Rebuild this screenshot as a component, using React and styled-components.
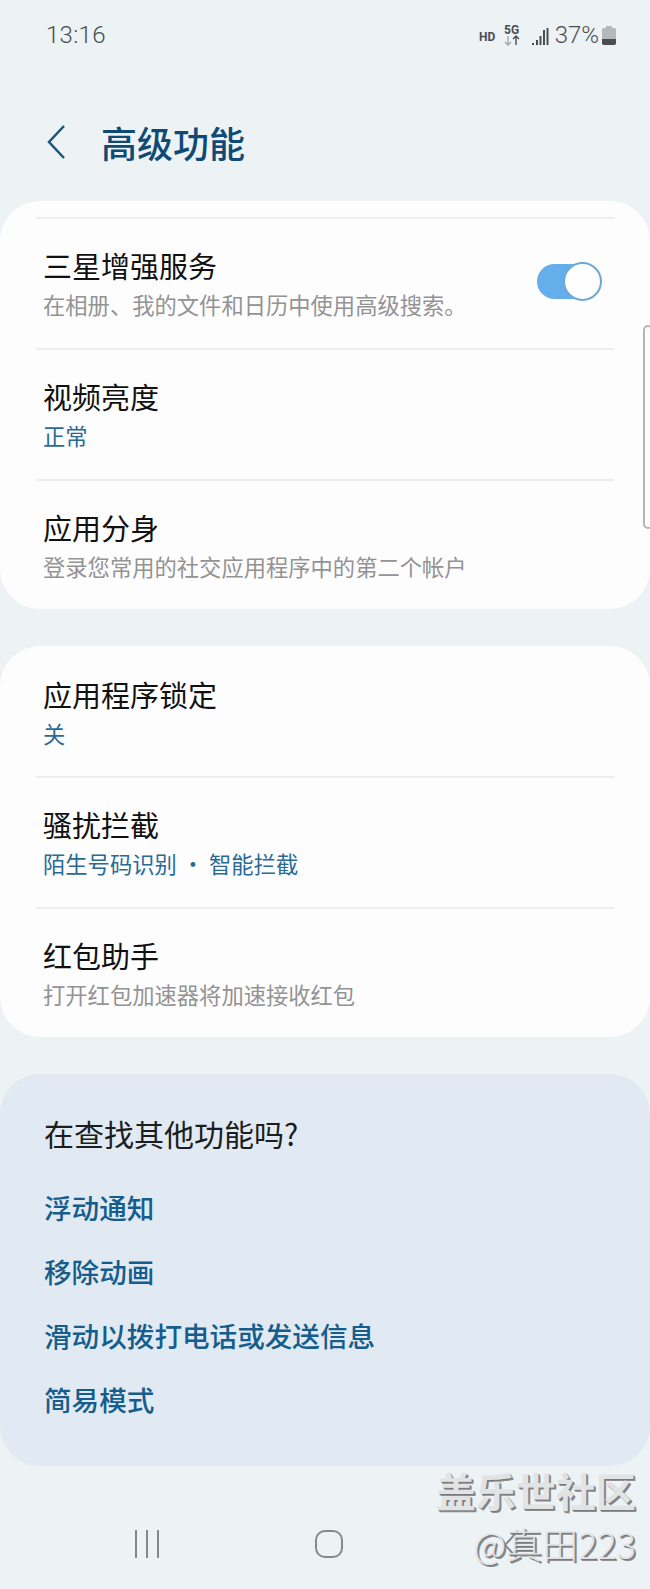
import styled, { createGlobalStyle } from "styled-components";

const GlobalStyle = createGlobalStyle`
	html, body {
		margin: 0;
		padding: 0;
		background: #edf2f5;
	}
	* {
		box-sizing: border-box;
	}
`;

const CJK = `"Noto Sans CJK SC", "Noto Sans", sans-serif`;

const Page = styled.div`
	position: relative;
	width: 650px;
	height: 1589px;
	overflow: hidden;
	background: #edf2f5;
	font-family: ${CJK};
`;

const StatusBar = styled.div`
	display: flex;
	align-items: center;
	justify-content: space-between;
	height: 70px;
	padding: 0 34px 0 46px;
	color: #4a4e52;
`;

const Time = styled.span`
	font-family: Roboto, sans-serif;
	font-weight: 300;
	font-size: 24px;
	letter-spacing: 0.3px;
`;

const StatusIcons = styled.div`
	display: flex;
	align-items: center;
`;

const Percent = styled.span`
	font-family: Roboto, sans-serif;
	font-weight: 300;
	font-size: 24px;
	margin: 0 3px 0 6px;
`;

const Header = styled.div`
	display: flex;
	align-items: center;
	height: 131px;
	padding: 12px 0 0 47px;
`;

const HeaderTitle = styled.h1`
	margin: 0 0 0 36px;
	font-size: 36px;
	line-height: 44px;
	font-weight: 500;
	color: #0f4a75;
`;

const Cards = styled.div`
	display: flex;
	flex-direction: column;
	gap: 37px;
`;

const Card = styled.section`
	background: #fdfdfe;
	border-radius: 40px;
	height: ${(props) => props.$height}px;
	padding-top: ${(props) => props.$top}px;
`;

const Row = styled.div`
	position: relative;
	height: ${(props) => props.$height}px;
	margin: 0 36px;
	padding: ${(props) => (props.$line ? 25 : 27)}px 7px 0;
	border-top: ${(props) => (props.$line ? "2px solid #ebedef" : "none")};
`;

const RowTitle = styled.div`
	font-size: 29px;
	line-height: 42px;
	color: #111;
`;

const RowSub = styled.div`
	margin-top: 2px;
	font-size: 22.3px;
	line-height: 32px;
	color: ${(props) => (props.$blue ? "#2a6b95" : "#939393")};
`;

const Toggle = styled.div`
	position: absolute;
	top: 43px;
	right: 12px;
	width: 65px;
	height: 39px;
`;

const ToggleTrack = styled.div`
	position: absolute;
	left: 0;
	top: 2px;
	width: 60px;
	height: 35px;
	border-radius: 18px;
	background: #64aeec;
`;

const ToggleKnob = styled.div`
	position: absolute;
	right: 0;
	top: 0;
	width: 39px;
	height: 39px;
	border-radius: 50%;
	background: #fefefe;
	border: 2px solid #6fa8d2;
`;

const MoreCard = styled.section`
	height: 392px;
	border-radius: 40px;
	background: #e1eaf2;
	padding: 38px 44px 0;
`;

const MoreTitle = styled.div`
	font-size: 30px;
	line-height: 42px;
	color: #1b1d20;
	margin-bottom: 32px;
`;

const MoreLinks = styled.div`
	display: flex;
	flex-direction: column;
	gap: 22px;
`;

const MoreLink = styled.div`
	font-size: 27.6px;
	line-height: 42px;
	font-weight: 500;
	color: #155d8c;
`;

const NavBar = styled.div`
	display: grid;
	grid-template-columns: repeat(3, 182px);
	justify-items: center;
	margin-top: 64px;
	padding-left: 56px;
`;

const ScrollHandle = styled.div`
	position: absolute;
	left: 643px;
	top: 325px;
	width: 10px;
	height: 204px;
	border: 2px solid #b3b5b7;
	border-radius: 6px;
`;

const Watermark = styled.div`
	position: absolute;
	right: 14px;
	bottom: 21px;
	display: flex;
	flex-direction: column;
	align-items: flex-end;
	color: #e2e3e4;
	text-shadow: 1px 1px 0 #77797b, 2px 2px 0 #8d8f91;
	pointer-events: none;
`;

const WatermarkTitle = styled.div`
	font-size: 40px;
	line-height: 56px;
	font-weight: 700;
`;

const WatermarkUser = styled.div`
	font-size: 36px;
	line-height: 50px;
	font-weight: 300;
`;

function Item({ title, sub, blue, line, height, toggle }) {
	return (
		<Row $line={line} $height={height}>
			<RowTitle>{title}</RowTitle>
			<RowSub $blue={blue}>{sub}</RowSub>
			{toggle && (
				<Toggle>
					<ToggleTrack />
					<ToggleKnob />
				</Toggle>
			)}
		</Row>
	);
}

export default function App() {
	return (
		<Page>
			<GlobalStyle />
			<StatusBar>
				<Time>13:16</Time>
				<StatusIcons>
					<svg width="70" height="30" viewBox="0 0 70 30">
						<text x="0" y="21" fontFamily="Roboto, sans-serif" fontWeight="700" fontSize="12" fill="#4a4e52">HD</text>
						<text x="25" y="14" fontFamily="Roboto, sans-serif" fontWeight="700" fontSize="12" fill="#4a4e52">5G</text>
						<path d="M29 16v9M26 22l3 3 3-3" stroke="#a4a7aa" strokeWidth="1.4" fill="none" />
						<path d="M37 25v-9M34 19l3-3 3 3" stroke="#4a4e52" strokeWidth="1.4" fill="none" />
						<path d="M53 23h2v2h-2zM57 20h2v5h-2zM60.500 16h2v9h-2zM64 10h2v15h-2zM67.500 8h2v17h-2z" fill="#4a4e52" />
					</svg>
					<Percent>37%</Percent>
					<svg width="14" height="19" viewBox="0 0 14 19">
						<path d="M4 0h6v2h2.500a1.500 1.500 0 0 1 1.500 1.500V17a2 2 0 0 1-2 2H2a2 2 0 0 1-2-2V3.500A1.500 1.500 0 0 1 1.500 2H4z" fill="#b5b8bb" />
						<path d="M0 13h14v4a2 2 0 0 1-2 2H2a2 2 0 0 1-2-2z" fill="#4a4e52" />
					</svg>
				</StatusIcons>
			</StatusBar>
			<Header>
				<svg width="18" height="34" viewBox="0 0 18 34">
					<path d="M17 1 2 17l15 16" stroke="#1c5478" strokeWidth="2.500" fill="none" />
				</svg>
				<HeaderTitle>高级功能</HeaderTitle>
			</Header>
			<Cards>
				<Card $height={408} $top={16}>
					<Item line height={131} toggle title="三星增强服务" sub="在相册、我的文件和日历中使用高级搜索。" />
					<Item line height={131} blue title="视频亮度" sub="正常" />
					<Item line height={130} title="应用分身" sub="登录您常用的社交应用程序中的第二个帐户" />
				</Card>
				<Card $height={391} $top={0}>
					<Item height={130} blue title="应用程序锁定" sub="关" />
					<Item line height={131} blue title="骚扰拦截" sub="陌生号码识别 • 智能拦截" />
					<Item line height={130} title="红包助手" sub="打开红包加速器将加速接收红包" />
				</Card>
				<MoreCard>
					<MoreTitle>在查找其他功能吗?</MoreTitle>
					<MoreLinks>
						<MoreLink>浮动通知</MoreLink>
						<MoreLink>移除动画</MoreLink>
						<MoreLink>滑动以拨打电话或发送信息</MoreLink>
						<MoreLink>简易模式</MoreLink>
					</MoreLinks>
				</MoreCard>
			</Cards>
			<ScrollHandle />
			<NavBar>
				<svg width="26" height="28" viewBox="0 0 26 28">
					<path d="M2 0v28M13 0v28M24 0v28" stroke="#85898d" strokeWidth="2" fill="none" />
				</svg>
				<svg width="28" height="28" viewBox="0 0 28 28">
					<rect x="1" y="1" width="26" height="26" rx="9" stroke="#85898d" strokeWidth="2" fill="none" />
				</svg>
				<svg width="16" height="30" viewBox="0 0 16 30">
					<path d="M15 1 2 15l13 14" stroke="#85898d" strokeWidth="2" fill="none" />
				</svg>
			</NavBar>
			<Watermark>
				<WatermarkTitle>盖乐世社区</WatermarkTitle>
				<WatermarkUser>@真田223</WatermarkUser>
			</Watermark>
		</Page>
	);
}
